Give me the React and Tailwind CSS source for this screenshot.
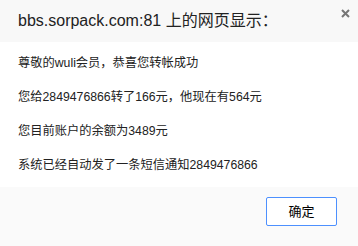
import React from 'react';

const font = { fontFamily: '"Liberation Sans", "Noto Sans CJK SC", sans-serif' };

export default function App() {
  const lines = [
    '尊敬的wuli会员，恭喜您转帐成功',
    '您给2849476866转了166元，他现在有564元',
    '您目前账户的余额为3489元',
    '系统已经自动发了一条短信通知2849476866',
  ];

  return (
    <div className="w-[358px] h-[246px] bg-white text-[#222] flex flex-col overflow-hidden" style={font}>
      {/* Header */}
      <div className="relative h-[42px] bg-[#f8f8f8] flex items-center pl-[18px]">
        <span className="text-[16px] leading-none">bbs.sorpack.com:81 上的网页显示：</span>
        <svg className="absolute left-[341px] top-[9px]" width="9" height="9" viewBox="0 0 9 9">
          <path d="M1 1L8 8M8 1L1 8" stroke="#767676" strokeWidth="2" />
        </svg>
      </div>

      {/* Body */}
      <div className="flex flex-col gap-[18px] pl-[18px] pt-[13px] pb-[14px] text-[12.25px]">
        {lines.map((l, i) => (
          <p key={i} className="h-[16px] leading-[16px] whitespace-nowrap">{l}</p>
        ))}
      </div>

      {/* Footer */}
      <div className="flex-1 bg-[#fafafa] flex justify-end items-start pt-[10px] pr-[21px]">
        <button className="w-[71px] h-[29px] bg-white border border-[#4d90fe] rounded-[2px] text-[13px] text-black leading-none">
          确定
        </button>
      </div>
    </div>
  );
}
